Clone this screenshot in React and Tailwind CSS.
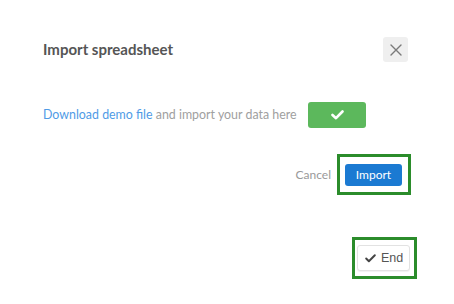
import { Check } from "lucide-react";

export default function App() {
  return (
    <div className="w-[454px] h-[304px] bg-white font-['Lato','Liberation_Sans',sans-serif] flex flex-col">
      <div className="pt-[37px] pl-[43px] pr-[46px] flex items-center justify-between">
        <h1 className="text-[15px] font-bold text-[#555]">Import spreadsheet</h1>
        <button className="w-[25px] h-[25px] rounded-[3px] bg-[#efefef] flex items-center justify-center">
          <svg width="12" height="12" viewBox="0 0 12 12" stroke="#7a7a7a" strokeWidth="1.4" strokeLinecap="round">
            <path d="M1 1L11 11M11 1L1 11" />
          </svg>
        </button>
      </div>

      <div className="mt-[40px] pl-[43px] flex items-center">
        <p className="text-[12.4px] text-[#a0a0a0]">
          <a className="text-[#4f9be6]">Download demo file</a> and import your data here
        </p>
        <button className="ml-auto mr-[88px] w-[58px] h-[26px] rounded-[3px] bg-[#5cb85c] flex items-center justify-center">
          <svg width="13" height="10" viewBox="0 0 13 10" fill="none" stroke="white" strokeWidth="2.6" strokeLinecap="round" strokeLinejoin="round">
            <path d="M1.5 5L5 8.2L11.5 1.5" />
          </svg>
        </button>
      </div>

      <div className="mt-[26px] pr-[43px] flex items-center justify-end">
        <span className="text-[12px] text-[#999] mr-[6px]">Cancel</span>
        <div className="border-[3px] border-[#2b8c2b] pl-[5px] pr-[6px] pt-[7px] pb-[6px]">
          <button className="w-[57px] h-[22px] rounded-[3px] bg-[#1b7ad2] text-white text-[12px] flex items-center justify-center">
            Import
          </button>
        </div>
      </div>

      <div className="mt-[42px] pr-[37px] flex justify-end">
        <div className="border-[3px] border-[#2b8c2b] pl-[2px] pr-[4px] py-[5px]">
          <button className="w-[53px] h-[26px] rounded-[3px] border border-[#e2e2e2] bg-white shadow-[0_1px_1px_rgba(0,0,0,0.06)] flex items-center justify-center gap-[4px] text-[12.5px] text-[#555] font-['Liberation_Sans',sans-serif]">
            <Check size={13} strokeWidth={3.6} color="#444" />
            End
          </button>
        </div>
      </div>
    </div>
  );
}
